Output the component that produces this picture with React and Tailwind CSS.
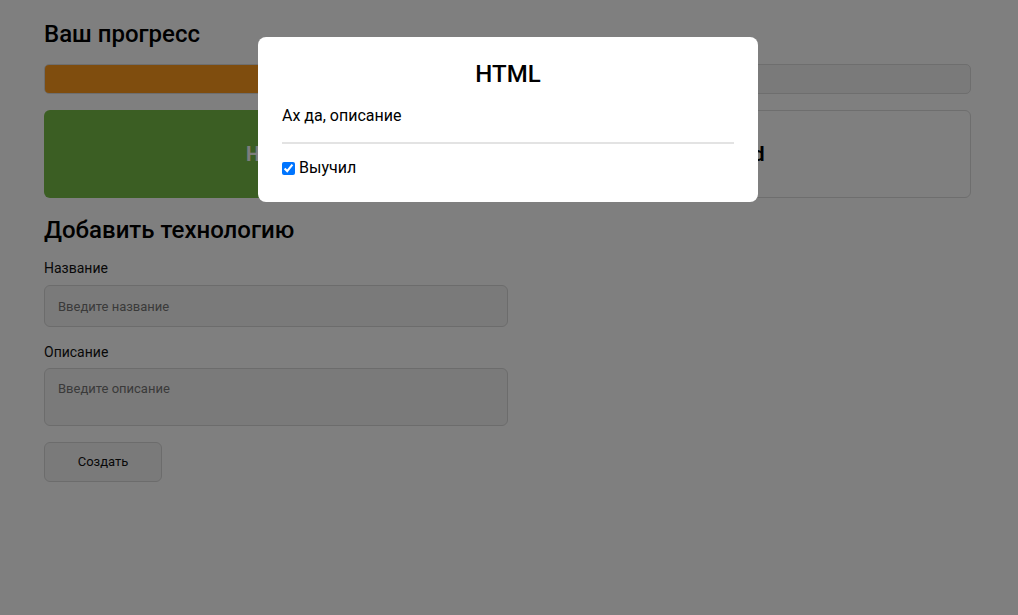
import React from "react";

export default function App() {
  return (
    <div className="min-h-[615px] bg-white text-black" style={{ fontFamily: "Roboto, 'Noto Sans', sans-serif" }}>
      <div className="pl-[44px] pr-[47px] pt-[20px]">
        <h1 className="text-[24px] leading-[28px] font-medium">Ваш прогресс</h1>
        <div className="mt-[16px] h-[30px] rounded-[5px] border border-[#dcdcdc] bg-[#f4f4f4] overflow-hidden">
          <div className="h-full w-1/2 bg-[#ff9a1c]" />
        </div>
        <div className="mt-[16px] grid grid-cols-2 gap-[10px]">
          <div className="h-[88px] rounded-[6px] bg-[#77bc47] flex items-center justify-center">
            <span className="text-[20px] font-bold text-[#fafafa]">HTML</span>
          </div>
          <div className="h-[88px] rounded-[6px] border border-[#dcdcdc] bg-white flex items-center justify-center">
            <span className="text-[20px] font-bold text-black">Solid</span>
          </div>
        </div>
        <h2 className="mt-[18px] text-[24px] leading-[28px] font-medium">Добавить технологию</h2>
        <div className="w-1/2 flex flex-col">
          <label className="mt-[14px] text-[14px] leading-[20px] text-[#111]">Название</label>
          <input
            className="mt-[7px] h-[42px] rounded-[6px] border border-[#d8d8d8] bg-[#f5f5f5] px-[13px] text-[13px] placeholder:text-[#757575] outline-none"
            placeholder="Введите название"
          />
          <label className="mt-[15px] text-[14px] leading-[20px] text-[#111]">Описание</label>
          <textarea
            className="mt-[6px] h-[58px] resize-none rounded-[6px] border border-[#d8d8d8] bg-[#f5f5f5] px-[13px] py-[12px] text-[13px] leading-[16px] placeholder:text-[#757575] outline-none"
            placeholder="Введите описание"
          />
          <button
            type="button"
            className="mt-[16px] h-[40px] w-[118px] rounded-[6px] border border-[#d8d8d8] bg-[#f5f5f5] text-[13px] text-[#111]"
          >
            Создать
          </button>
        </div>
      </div>

      <div className="fixed inset-0 bg-[#00000080] flex justify-center items-start pt-[37px] pr-[2px]">
        <div className="w-[500px] rounded-[8px] bg-white px-[24px] pt-[23px] pb-[22px]">
          <div className="text-center text-[24px] leading-[28px] font-medium">HTML</div>
          <p className="mt-[16px] text-[16px] leading-[24px]">Ах да, описание</p>
          <div className="mt-[14px] h-[2px] bg-[#e3e3e3]" />
          <label className="mt-[12px] flex items-center text-[16px] leading-[24px]">
            <input type="checkbox" checked readOnly className="m-0 mr-[4px] h-[13px] w-[13px]" />
            Выучил
          </label>
        </div>
      </div>
    </div>
  );
}
